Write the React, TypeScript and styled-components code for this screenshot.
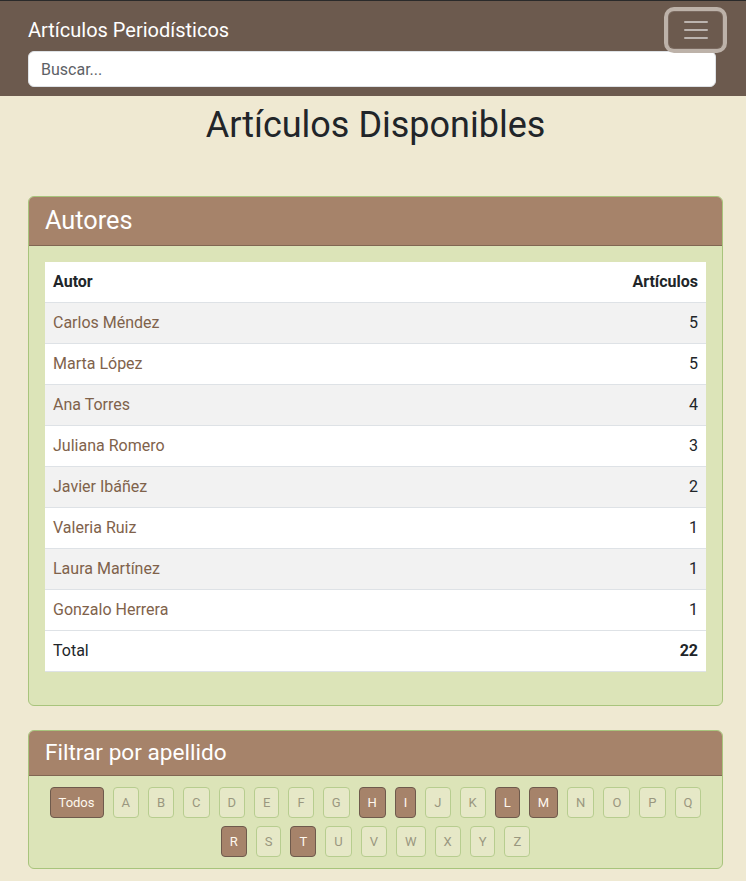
import React from "react";
import styled, { createGlobalStyle } from "styled-components";

const GlobalStyle = createGlobalStyle`
  html, body { margin: 0; padding: 0; }
  body {
    background: #efe9d2;
    font-family: Roboto, "Noto Sans", sans-serif;
    color: #212529;
    font-size: 16px;
    line-height: 1.5;
  }
  * { box-sizing: border-box; }
`;

const Navbar = styled.header`
  background: #6c5a4e;
  border-top: 1px solid #2a2a2a;
  padding: 8px 23px 9px 28px;
`;

const NavTop = styled.div`
  display: flex;
  justify-content: space-between;
  align-items: center;
  height: 42px;
`;

const Brand = styled.a`
  color: #fff;
  font-size: 20px;
  line-height: 30px;
  text-decoration: none;
`;

const Toggler = styled.button`
  width: 55px;
  height: 38px;
  padding: 0;
  display: flex;
  align-items: center;
  justify-content: center;
  background: transparent;
  border: 1px solid rgba(255, 255, 255, 0.1);
  border-radius: 6px;
  box-shadow: 0 0 0 4px #bdb2a9;
`;

const SearchInput = styled.input`
  display: block;
  width: calc(100% - 7px);
  height: 36px;
  padding: 6px 12px;
  font: inherit;
  font-size: 16px;
  color: #212529;
  background: #fff;
  border: 1px solid #dee2e6;
  border-radius: 6px;
  outline: none;
  &::placeholder { color: #5d6166; }
`;

const Main = styled.main`
  padding: 0 23px 12px 28px;
`;

const Title = styled.h1`
  margin: 8px 0 49px;
  text-align: center;
  font-size: 36px;
  font-weight: 400;
  line-height: 1.2;
  color: #212529;
`;

const Card = styled.section<{ $gap?: number }>`
  border: 1px solid #a8c47c;
  border-radius: 6px;
  overflow: hidden;
  background: #dce4b8;
  margin-bottom: ${(p) => p.$gap ?? 0}px;
`;

const CardHeader = styled.div`
  background: #a6836a;
  border-bottom: 1px solid rgba(0, 0, 0, 0.22);
  padding: 8px 16px;
`;

const CardTitle = styled.h3<{ $size: number; $lh: number }>`
  margin: 0;
  color: #fff;
  font-size: ${(p) => p.$size}px;
  font-weight: 400;
  line-height: ${(p) => p.$lh}px;
`;

const CardBody = styled.div<{ $pad: string }>`
  padding: ${(p) => p.$pad};
`;

const Table = styled.table`
  width: 100%;
  border-collapse: collapse;
  background: #fff;
  margin-bottom: 16px;
`;

const Row = styled.tr<{ $striped?: boolean }>`
  background: ${(p) => (p.$striped ? "#f2f2f2" : "#fff")};
  border-bottom: 1px solid #dee2e6;
`;

const Cell = styled.td<{ $right?: boolean; $bold?: boolean; $link?: boolean }>`
  padding: 8px;
  line-height: 24px;
  text-align: ${(p) => (p.$right ? "right" : "left")};
  font-weight: ${(p) => (p.$bold ? 700 : 400)};
  color: ${(p) => (p.$link ? "#7f624b" : "#212529")};
`;

const HeadCell = styled.th<{ $right?: boolean }>`
  padding: 8px;
  line-height: 24px;
  font-weight: 700;
  text-align: ${(p) => (p.$right ? "right" : "left")};
  color: #212529;
`;

const Letters = styled.div`
  display: flex;
  flex-wrap: wrap;
  justify-content: center;
  gap: 8px 9px;
`;

const LetterBtn = styled.button<{ $active?: boolean }>`
  font-family: inherit;
  font-size: 13px;
  line-height: 21px;
  padding: 4px 8px;
  border-radius: 4px;
  border: 1px solid ${(p) => (p.$active ? "#6e5a4c" : "#b7cd8f")};
  background: ${(p) => (p.$active ? "#a6836a" : "#e6e8c7")};
  color: ${(p) => (p.$active ? "#fff8ee" : "#9a977f")};
  cursor: pointer;
`;

const authors: [string, number][] = [
  ["Carlos Méndez", 5],
  ["Marta López", 5],
  ["Ana Torres", 4],
  ["Juliana Romero", 3],
  ["Javier Ibáñez", 2],
  ["Valeria Ruiz", 1],
  ["Laura Martínez", 1],
  ["Gonzalo Herrera", 1],
];

const active = new Set(["H", "I", "L", "M", "R", "T"]);
const letters = "ABCDEFGHIJKLMNOPQRSTUVWXYZ".split("");

export default function App() {
  return (
    <>
      <GlobalStyle />
      <Navbar>
        <NavTop>
          <Brand href="#">Artículos Periodísticos</Brand>
          <Toggler aria-label="menu">
            <svg width="30" height="30" viewBox="0 0 30 30">
              <path
                d="M4 7h22M4 15h22M4 23h22"
                stroke="rgba(255,255,255,0.55)"
                strokeWidth="2"
                strokeLinecap="round"
              />
            </svg>
          </Toggler>
        </NavTop>
        <SearchInput placeholder="Buscar..." />
      </Navbar>
      <Main>
        <Title>Artículos Disponibles</Title>
        <Card $gap={24}>
          <CardHeader>
            <CardTitle $size={25.3} $lh={32}>Autores</CardTitle>
          </CardHeader>
          <CardBody $pad="16px 16px 17px">
            <Table>
              <thead>
                <Row>
                  <HeadCell>Autor</HeadCell>
                  <HeadCell $right>Artículos</HeadCell>
                </Row>
              </thead>
              <tbody>
                {authors.map(([name, n], i) => (
                  <Row key={name} $striped={i % 2 === 0}>
                    <Cell $link>{name}</Cell>
                    <Cell $right>{n}</Cell>
                  </Row>
                ))}
                <Row>
                  <Cell>Total</Cell>
                  <Cell $right $bold>22</Cell>
                </Row>
              </tbody>
            </Table>
          </CardBody>
        </Card>
        <Card>
          <CardHeader>
            <CardTitle $size={22.6} $lh={28}>Filtrar por apellido</CardTitle>
          </CardHeader>
          <CardBody $pad="11px 16px 11px">
            <Letters>
              <LetterBtn $active>Todos</LetterBtn>
              {letters.map((l) => (
                <LetterBtn key={l} $active={active.has(l)}>
                  {l}
                </LetterBtn>
              ))}
            </Letters>
          </CardBody>
        </Card>
      </Main>
    </>
  );
}
